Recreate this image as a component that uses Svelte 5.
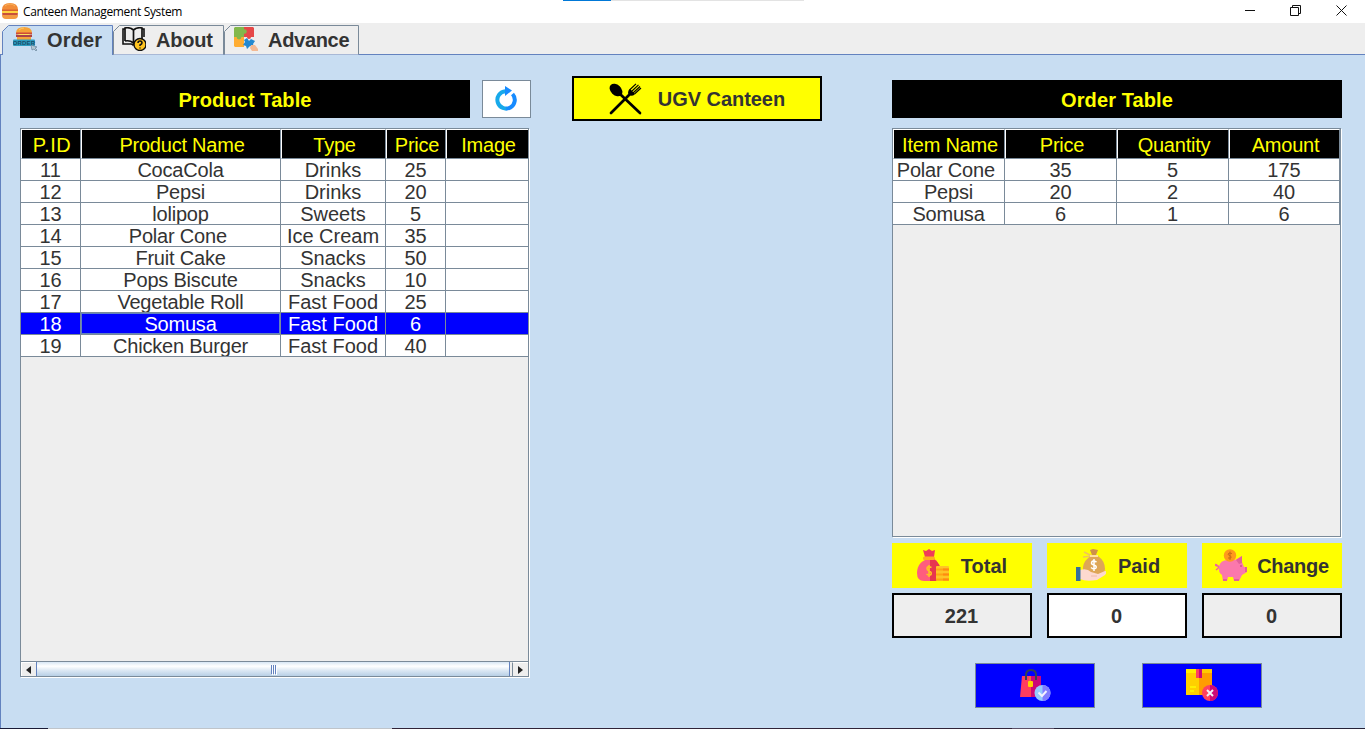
<script>
  const products = [
    [11, 'CocaCola', 'Drinks', 25],
    [12, 'Pepsi', 'Drinks', 20],
    [13, 'lolipop', 'Sweets', 5],
    [14, 'Polar Cone\u00a0', 'Ice Cream', 35],
    [15, 'Fruit Cake', 'Snacks', 50],
    [16, 'Pops Biscute', 'Snacks', 10],
    [17, 'Vegetable Roll', 'Fast Food', 25],
    [18, 'Somusa', 'Fast Food', 6],
    [19, 'Chicken Burger', 'Fast Food', 40]
  ];
  const orders = [
    ['Polar Cone\u00a0', 35, 5, 175],
    ['Pepsi', 20, 2, 40],
    ['Somusa', 6, 1, 6]
  ];
  let selected = $state(18);
</script>

<div class="window">
  <header class="titlebar">
    <div class="loading"></div>
    <svg class="logo" width="16" height="16" viewBox="0 0 16 16">
      <path d="M0 7Q0 0 8 0T16 7Z" fill="#f28c38" />
      <path d="M3 3Q5 1 8 1T13 3" stroke="#f9b25a" fill="none" />
      <rect y="6.500" width="16" height="1.500" fill="#d8642f" />
      <rect x="0" y="8" width="16" height="2.500" fill="#ffd23f" />
      <rect y="10" width="16" height="2" rx="1" fill="#c8503a" />
      <path d="M0 12H16Q16 16 12 16H4Q0 16 0 12Z" fill="#f39a42" />
    </svg>
    <span class="apptitle">Canteen Management System</span>
    <div class="controls">
      <svg width="11" height="11" viewBox="0 0 11 11"><path d="M1 5.500H11" /></svg>
      <svg width="11" height="11" viewBox="0 0 11 11"><path d="M.5 2.500H8.500V10.500H.5ZM2.500 2.500V.5H10.500V8.500H8.500" /></svg>
      <svg width="11" height="11" viewBox="0 0 11 11"><path d="M.5.5L10.500 10.500M10.500.5L.5 10.500" /></svg>
    </div>
  </header>

  <nav class="tabs">
    <div class="tab order">
      <svg class="shape" width="111" height="30"><path d="M.5 30V6.500L6.500.5H110.500V30" fill="#c8ddf2" stroke="#6382bf" /></svg>
      <svg class="ico" width="24" height="24" viewBox="0 0 24 24">
        <path d="M3 6Q3 0 11 0T19 6Z" fill="#f6a338" />
        <path d="M6 3Q8 1 11 1" stroke="#ffc864" fill="none" />
        <rect x="3" y="5.500" width="16" height="2" fill="#cf4a38" />
        <path d="M4 7H18L11 10Z" fill="#ffe05a" />
        <rect x="3" y="8" width="16" height="2" fill="#a8424b" />
        <rect x="4" y="10" width="14" height="3" fill="#f6a338" />
        <rect x="0" y="12.500" width="22" height="6.500" rx="1" fill="#2f9cc0" />
        <text x="11" y="18" text-anchor="middle" font-size="6" font-weight="700" fill="#174d68">ORDER</text>
        <path d="M18 18L24 20L22 21L24 23L23 24L21 22L19 23Z" fill="#b5c8d3" stroke="#597990" stroke-width=".6" />
      </svg>
      <span>Order</span>
    </div>
    <div class="tab about">
      <svg class="shape" width="111" height="30"><path d="M.5 29.500V6.500L6.500.5H110.500V29.500" fill="#eee" stroke="#7a8a99" /></svg>
      <svg class="ico" width="24" height="24" viewBox="0 0 24 24">
        <path d="M3 2H1V17H9Q10 17 11 18L12 17H15M20 2H22V10" fill="none" stroke="#111" stroke-width="1.600" />
        <path d="M3 14V1Q8 0 11.500 3Q15 0 20 1V12M3 14Q8 13 11.500 16V3M11.500 16L14 14" fill="#eee" stroke="#111" stroke-width="1.700" />
        <circle cx="18" cy="17.500" r="6" fill="#ffc41f" stroke="#111" stroke-width="1.400" />
        <path d="M16 16Q16 14 18 14T20 16Q20 17 18 18V19M18 20.500V21.500" fill="none" stroke="#111" stroke-width="1.500" />
      </svg>
      <span>About</span>
    </div>
    <div class="tab advance">
      <svg class="shape" width="135" height="30"><path d="M.5 29.500V6.500L6.500.5H134.500V29.500" fill="#eee" stroke="#7a8a99" /></svg>
      <svg class="ico" width="24" height="24" viewBox="0 0 24 24">
        <path d="M1 0H10V10H0V1Z" fill="#83b84b" />
        <path d="M10 0H19L20 1V10H10Z" fill="#e54848" />
        <circle cx="10.500" cy="4.500" r="2.300" fill="#83b84b" />
        <path d="M0 10H10V20H1L0 19Z" fill="#ffad32" />
        <circle cx="5" cy="10" r="2.400" fill="#83b84b" /><circle cx="15" cy="10" r="2" fill="#e54848" />
        <path d="M10 10H12.500A2.500 2.500 0 0 0 17.500 10H20V20H10Z" fill="#eee" />
        <path d="M10 13L13 11L15 14L17 12L21 14L19 17L20 20L16 19L13 22L12 19L9 18L11 15Z" fill="#2389d0" />
        <path d="M17 18L21 18L24 22V24H18L16 21Z" fill="#f3b993" />
      </svg>
      <span>Advance</span>
    </div>
  </nav>

  <main>
    <section class="products">
      <div class="headrow">
        <h2>Product Table</h2>
        <button class="refresh" aria-label="refresh">
          <svg width="24" height="26" viewBox="0 0 24 26">
            <defs><linearGradient id="rg"><stop offset=".45" stop-color="#17a9ea" /><stop offset=".55" stop-color="#168bff" /></linearGradient></defs>
            <path d="M12.500 6.200A8.700 8.700 0 1 0 19.500 9" fill="none" stroke="url(#rg)" stroke-width="4" />
            <path d="M12 1L19 5.500L12 11Z" fill="#168bff" />
          </svg>
        </button>
      </div>
      <div class="pane product-pane">
        <div class="grid thead pcols">
          {#each ['P.ID', 'Product Name', 'Type', 'Price', 'Image'] as h}<div>{h}</div>{/each}
        </div>
        {#each products as p}
          <!-- svelte-ignore a11y_click_events_have_key_events, a11y_no_static_element_interactions -->
          <div class="grid row pcols" class:selected={p[0] === selected} onclick={() => (selected = p[0])}>
            {#each p as c}<div>{c}</div>{/each}<div></div>
          </div>
        {/each}
        <div class="scroll">
          <div class="arrow"><svg width="5" height="8" viewBox="0 0 5 8"><path d="M5 0V8L0 4Z" /></svg></div>
          <div class="thumb"><i></i><i></i><i></i></div>
          <div class="arrow right"><svg width="5" height="8" viewBox="0 0 5 8"><path d="M0 0V8L5 4Z" /></svg></div>
        </div>
      </div>
    </section>

    <div class="brand">
      <svg width="33" height="32" viewBox="0 0 33 32">
        <ellipse cx="7" cy="7" rx="7.300" ry="5.300" transform="rotate(44 7 7)" />
        <path d="M11 11L31 30" stroke="#000" stroke-width="2.700" stroke-linecap="round" />
        <path d="M2 30L22 10" stroke="#000" stroke-width="2.700" stroke-linecap="round" />
        <path d="M19 10Q19 7 21 6L26 11Q24 14 20 12Z" />
        <path d="M20.500 7L27 .8M22.500 8.500L29.500 1.800M24 10L31 3.500M25.500 11L32 5" stroke="#000" stroke-width="1.150" />
      </svg>
      <span>UGV Canteen</span>
    </div>

    <section class="orders">
      <h2>Order Table</h2>
      <div class="pane order-pane">
        <div class="grid thead ocols">
          {#each ['Item Name', 'Price', 'Quantity', 'Amount'] as h}<div>{h}</div>{/each}
        </div>
        {#each orders as o}
          <div class="grid row ocols">{#each o as c}<div>{c}</div>{/each}</div>
        {/each}
      </div>
      <div class="sums labels">
        <div>
          <svg width="32" height="32" viewBox="0 0 32 32">
            <path d="M6 1L9 2L12 0L15 2L18 1L17 8H8Z" fill="#f03c59" />
            <path d="M8 11C2 14 0 19 0 24Q0 32 7 32H20V12Q18 10 16 10Z" fill="#ff5d7d" />
            <path d="M13 10H17Q24 15 24 23V32H13Z" fill="#e7354f" />
            <rect x="6" y="7.500" width="12" height="3.500" rx="1.500" fill="#ffb11b" />
            <path d="M14.500 18.500Q10 16.500 10 19.500Q10 21 12 22Q15 23 14 25.500Q12 27 9.500 25M12 16V28" fill="none" stroke="#ffc31f" stroke-width="1.600" />
            <rect x="19" y="17" width="13" height="15" rx="1" fill="#ffc426" />
            <path d="M19 20.500H32M19 25.500H32M19 30.500H32" stroke="#ffa511" stroke-width="2" />
            <path d="M26 20.500H32M26 25.500H32M26 30.500H32" stroke="#ff8a11" stroke-width="2" />
          </svg>
          <span>Total</span>
        </div>
        <div>
          <svg width="32" height="32" viewBox="0 0 32 32">
            <path d="M16 1L19 0L24 1L22 6H18Z" fill="#cf9149" />
            <path d="M10 3L18 7L9 8" fill="none" stroke="#f1c45b" stroke-width="1.600" />
            <path d="M17 7H24Q31 12 31 20Q31 26 24 26H15Q8 25 9 18Q10 11 17 7Z" fill="#dea656" />
            <path d="M16 7H24" stroke="#ffe1a0" stroke-width="2" />
            <path d="M22.500 13Q18 10.500 17.500 14Q17.500 15.500 20 16Q23 17 22 19Q20 21 17 18.500M20 10V22" fill="none" stroke="#fff" stroke-width="1.500" />
            <path d="M6 21Q13 19 17 23L24 25L31 22Q34 22 31 26L23 31Q12 33 6 30Z" fill="#fdd9cf" />
            <path d="M17 27H23" stroke="#eeb8ad" fill="none" />
            <rect x="2" y="18" width="4.500" height="14" fill="#356f9c" />
          </svg>
          <span>Paid</span>
        </div>
        <div class="change">
          <svg width="32" height="32" viewBox="0 0 32 32">
            <path d="M4 18C-1 13 0 17 3 17Q5 18 1 21" fill="none" stroke="#ef62a0" stroke-width="1.500" />
            <path d="M4 18Q5 11 13 11H20L27 7V13L29 18H32V23L27 26L24 32H19L18 28H13L12 32H8L7 26Q3 23 4 18Z" fill="#fb78ac" />
            <path d="M21 11L27 7V14L24 15ZM30 18H32V23L30 23ZM8 30H12V32H8ZM19 30H24V32H19Z" fill="#e2609a" />
            <circle cx="15" cy="6.500" r="6.200" fill="#ff991c" />
            <path d="M17 4.500Q13 3 13 5.500Q17 7 16 9H13M15 2.500V11" fill="none" stroke="#c96a17" />
            <circle cx="26" cy="17" r=".8" fill="#a93b71" />
          </svg>
          <span>Change</span>
        </div>
      </div>
      <div class="sums fields">
        <div>221</div>
        <div class="editable">0</div>
        <div>0</div>
      </div>
      <div class="actions">
        <button aria-label="confirm">
          <svg width="32" height="32" viewBox="0 0 32 32">
            <path d="M3 7H13V28H1Z" fill="#ff3c5f" /><path d="M12 7H22V28H12Z" fill="#cc0877" />
            <path d="M7 11V6Q7 1 12 1T17 6V11" fill="none" stroke="#344253" stroke-width="2" />
            <path d="M11 7V13" stroke="#d79420" /><rect x="9" y="12" width="5" height="6" rx="1" fill="#ffd000" />
            <circle cx="23.500" cy="24" r="8" fill="#94caff" /><path d="M23.500 16A8 8 0 0 1 23.500 32Z" fill="#817cff" />
            <path d="M19.500 23.500L23 27L27.500 22" fill="none" stroke="#f3f2ff" stroke-width="2" />
          </svg>
        </button>
        <button aria-label="cancel">
          <svg width="32" height="32" viewBox="0 0 32 32">
            <path d="M0 0H13V26H0Z" fill="#ffd000" /><path d="M13 0H26V26H13Z" fill="#ff9d00" />
            <path d="M0 0H13V4H0Z" fill="#fff000" /><path d="M13 0H26V4H13Z" fill="#ffca00" />
            <path d="M10 0H13V9H10Z" fill="#ff415f" /><path d="M13 0H16V9H13Z" fill="#cc0877" />
            <path d="M4 18H10M4 22H8" stroke="#fff000" stroke-width="2" />
            <circle cx="24" cy="24" r="8" fill="#ff415f" /><path d="M24 16A8 8 0 0 1 24 32Z" fill="#cc0877" />
            <path d="M21 21L27 27M27 21L21 27" stroke="#f2eff5" stroke-width="2" />
          </svg>
        </button>
      </div>
    </section>
  </main>
  <footer></footer>
</div>

<style>
  :global(body) { margin: 0; overflow: hidden; }
  * { box-sizing: border-box; }
  svg { display: block; flex: none; }
  .window { width: 1365px; height: 729px; display: flex; flex-direction: column; background: #eee; font: 20px/22px "Liberation Sans", Arial, sans-serif; color: #333; }
  .titlebar { height: 23px; background: #fff; display: flex; align-items: center; position: relative; padding: 0 18px 0 2px; flex: none; }
  .logo { margin-top: -2px; }
  .loading { position: absolute; left: 563px; top: 0; width: 241px; height: 1px; background: linear-gradient(90deg, #0078d7 48px, #e3e3e3 48px); }
  .apptitle { font: 12px/22px "Open Sans", sans-serif; color: #000; margin-left: 5px; letter-spacing: -.34px; white-space: nowrap; }
  .controls { margin-left: auto; display: flex; gap: 35px; margin-top: -3px; }
  .controls path { fill: none; stroke: #111; stroke-width: 1; }
  .tabs { height: 32px; flex: none; display: flex; padding: 2px 0 0 2px; border-bottom: 1px solid #6382bf; }
  .tab { height: 30px; position: relative; display: flex; align-items: center; font-weight: 700; white-space: nowrap; }
  .tab .shape { position: absolute; left: 0; top: 0; }
  .tab .ico { position: relative; margin-top: -3px; }
  .tab span { position: relative; margin-left: 10px; }
  .order { width: 111px; padding-left: 11px; letter-spacing: .15px; }
  .about { width: 111px; padding-left: 9px; letter-spacing: -.2px; }
  .advance { width: 135px; padding-left: 10px; letter-spacing: -.3px; }
  main { flex: 1; background: #c8ddf2; border-left: 1px solid #6382bf; display: flex; align-items: flex-start; padding: 25px 23px 0 19px; }
  h2 { margin: 0; font: 700 20px/40px "Liberation Sans", Arial, sans-serif; height: 38px; width: 450px; background: #000; color: #ff0; text-align: center; letter-spacing: .1px; }
  .products { width: 511px; }
  .headrow { display: flex; justify-content: space-between; }
  .refresh { width: 49px; height: 38px; border: 1px solid #7a8a99; background: #fff; padding: 0 3px 2px 0; display: grid; place-items: center; }
  .pane { margin-top: 10px; background: #eee; border: 1px solid #7a8a99; box-shadow: 1px 1px #fff; display: flex; flex-direction: column; }
  .product-pane { width: 509px; height: 549px; }
  .order-pane { width: 449px; height: 409px; }
  .grid { display: grid; text-align: center; white-space: nowrap; }
  .pcols { grid-template-columns: 60px 200px 105px 60px 82px; }
  .ocols { grid-template-columns: 112px 112px 112px 111px; }
  .grid div { border-right: 1px solid #7a8a99; border-bottom: 1px solid #7a8a99; overflow: hidden; }
  .pcols div:last-child { border-right: 0; }
  .thead div { height: 30px; background: #000; color: #ff0; line-height: 31px; border-left: 1px solid #fff; border-top: 1px solid #fff; padding-left: 2px; letter-spacing: -.22px; }
  .pcols.thead div:first-child { letter-spacing: .5px; }
  .row { background: #fff; }
  .row div { height: 22px; }
  .row.pcols div:nth-child(2), .row.ocols div:first-child { letter-spacing: -.2px; }
  .row.selected { background: #00f; color: #fff; }
  .selected div:nth-child(2) { box-shadow: inset 1px 1px #6382bf, inset -1px -1px #6382bf; }
  .scroll { margin-top: auto; height: 15px; display: flex; border-top: 1px solid #7a8a99; }
  .arrow { width: 15px; display: grid; place-items: center; border-left: 1px solid #fff; border-top: 1px solid #fff; padding-right: 2px; }
  .arrow path { fill: #222; }
  .arrow.right { border-left: 1px solid #7a8a99; margin-left: 2px; width: 16px; padding-right: 0; }
  .thumb { flex: 1; border: 1px solid #6382bf; border-width: 0 1px; background: linear-gradient(#d8e7f5, #fff 30%, #dce8f4 60%, #b8cfe5); display: flex; justify-content: center; align-items: center; gap: 1px; }
  .thumb i { width: 1px; height: 9px; background: #6382bf; box-shadow: 1px 1px #fff; }
  .brand { width: 250px; height: 45px; margin: -4px 70px 0 41px; border: 2px solid #000; background: #ff0; display: flex; align-items: center; justify-content: center; gap: 16px; font-weight: 700; letter-spacing: -.05px; }
  .orders { width: 450px; }
  .sums { display: flex; justify-content: space-between; font-weight: 700; }
  .sums > div { width: 140px; height: 45px; display: flex; align-items: center; justify-content: center; }
  .labels { margin-top: 6px; }
  .labels > div { background: #ff0; gap: 12px; }
  .labels svg { margin-top: -1px; }
  .labels > .change { gap: 10px; letter-spacing: -.3px; }
  .fields { margin-top: 5px; }
  .fields > div { border: 2px solid #000; background: #eee; padding-right: 1px; }
  .fields > .editable { background: #fff; }
  .actions { display: flex; gap: 47px; margin: 25px 0 0 83px; }
  .actions button { width: 120px; height: 45px; background: #00f; border: 1px solid #7a8a99; padding: 0 0 2px; display: flex; align-items: center; justify-content: center; }
  footer { height: 1px; flex: none; background: linear-gradient(90deg, #191a36 48px, #bfc4ca 48px 392px, #302338 392px 1012px, #5b5068 1012px 1054px, #252238 1054px); }
</style>
